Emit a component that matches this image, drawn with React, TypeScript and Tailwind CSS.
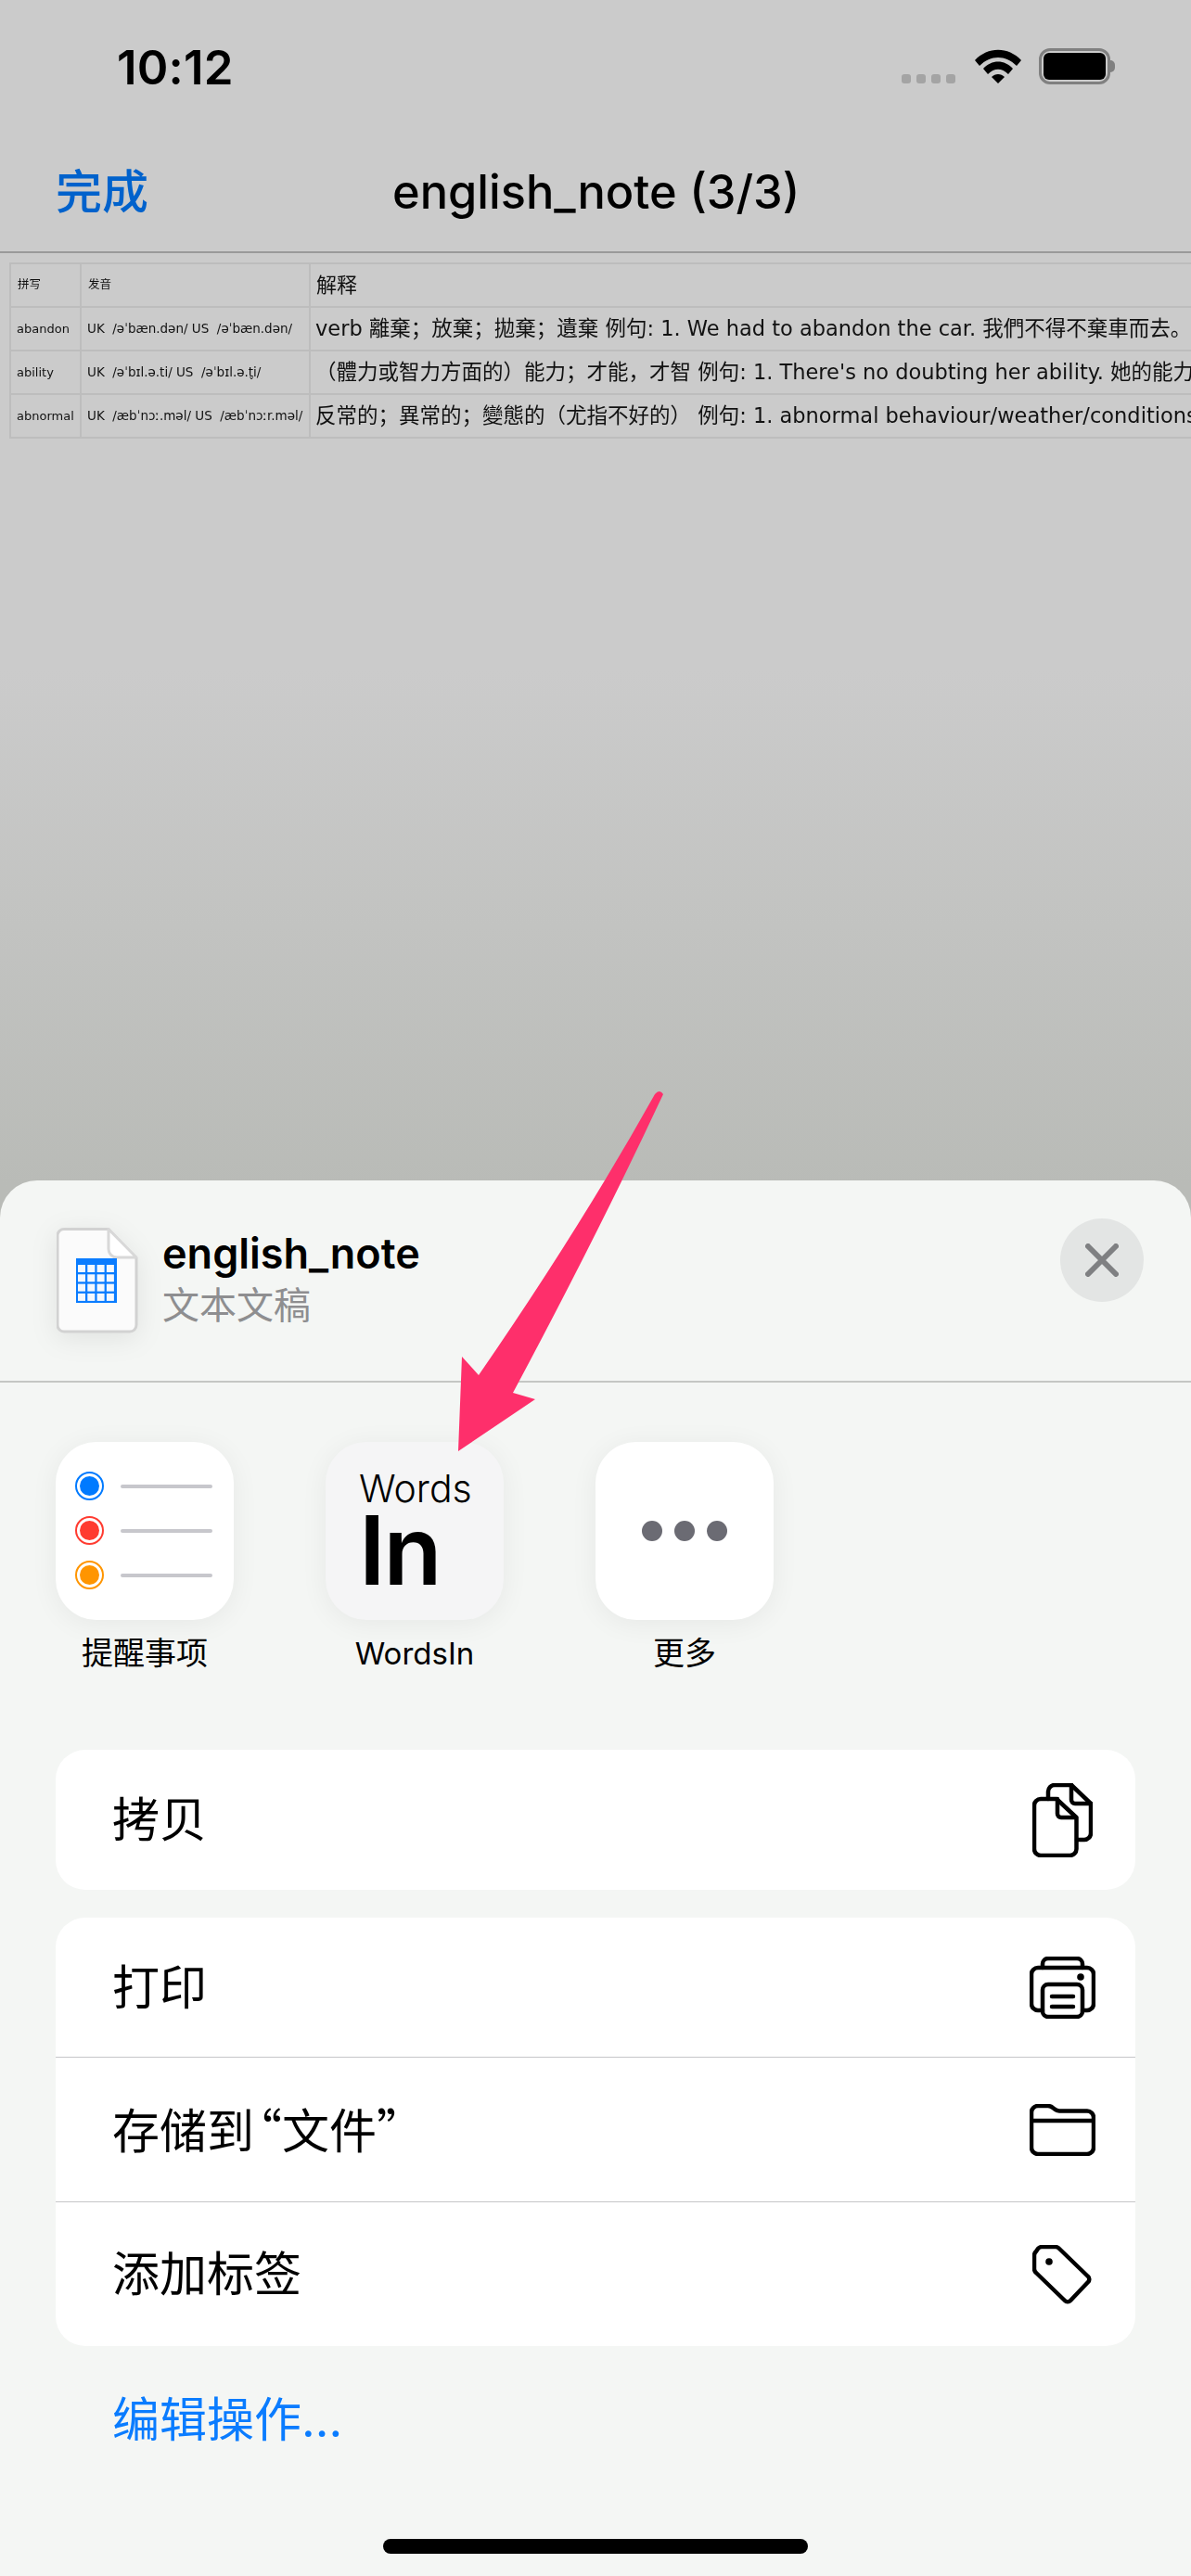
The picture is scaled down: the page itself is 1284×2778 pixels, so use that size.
// App.tsx
import React from 'react';

const tableRows = [
  {
    word: 'abandon',
    ipa: 'UK  /əˈbæn.dən/ US  /əˈbæn.dən/',
    meaning: 'verb 離棄；放棄；拋棄；遺棄 例句: 1. We had to abandon the car. 我們不得不棄車而去。',
  },
  {
    word: 'ability',
    ipa: 'UK  /əˈbɪl.ə.ti/ US  /əˈbɪl.ə.t̬i/',
    meaning: '（體力或智力方面的）能力；才能，才智 例句: 1. There\'s no doubting her ability. 她的能力',
  },
  {
    word: 'abnormal',
    ipa: 'UK  /æbˈnɔː.məl/ US  /æbˈnɔːr.məl/',
    meaning: '反常的；異常的；變態的（尤指不好的） 例句: 1. abnormal behaviour/weather/conditions',
  },
];

const WifiIcon = () => (
  <svg width="50" height="37" viewBox="0 0 50 37">
    <path d="M0 12 C14 -3 36 -3 50 12 L45 18 C33 6 17 6 5 18 Z" fill="#000" />
    <path d="M9 21 C18 11 32 11 41 21 L36 27 C29 20 21 20 14 27 Z" fill="#000" />
    <path d="M18 30 C22 26 28 26 32 30 L25 37 Z" fill="#000" />
  </svg>
);

const DocIcon = () => (
  <svg width="88" height="114" viewBox="0 0 88 114">
    <path d="M8 1.5 H56 L86 33 V105 a7 7 0 0 1 -7 7 H8 a7 7 0 0 1 -7 -7 V8 a7 7 0 0 1 7 -6.5 Z" fill="#fbfbfb" stroke="#d2d2d2" strokeWidth="3" />
    <path d="M56 1.5 V23 a9 9 0 0 0 9 9 H86 Z" fill="#fff" stroke="#d8d8d8" strokeWidth="3" strokeLinejoin="round" />
    <rect x="21" y="33" width="44" height="48" fill="#0a7cff" />
    {[0, 1, 2, 3].map((r) =>
      [0, 1, 2, 3].map((c) => (
        <rect key={`${r}-${c}`} x={23 + c * 10.3} y={40 + r * 10.3} width="8" height="8" fill="#f4f8fd" />
      ))
    )}
  </svg>
);

const ReminderRow = ({ color }: { color: string }) => (
  <div className="flex items-center gap-[18px]">
    <div className={`w-[31px] h-[31px] rounded-full border-[2.5px] p-[3px] ${color}`}>
      <div className="w-full h-full rounded-full bg-current" />
    </div>
    <div className="w-[99px] h-[4px] rounded-full bg-[#c7c7cc]" />
  </div>
);

const CopyIcon = () => (
  <svg width="65" height="80" viewBox="0 0 65 80" fill="none" stroke="#000" strokeWidth="4.5" strokeLinejoin="round" strokeLinecap="round">
    <path d="M17 17 V9 a7 7 0 0 1 7 -7 H42 L63 22 V54 a7 7 0 0 1 -7 7 H48" />
    <path d="M42 2 V18 a4 4 0 0 0 4 4 H63" />
    <path d="M2 24 a7 7 0 0 1 7 -7 H26 L47.5 37 V71 a7 7 0 0 1 -7 7 H9 a7 7 0 0 1 -7 -7 Z" />
    <path d="M27 17 V33 a4 4 0 0 0 4 4 H47" />
  </svg>
);

const PrintIcon = () => (
  <svg width="71" height="67" viewBox="0 0 71 67" fill="none" stroke="#000" strokeWidth="4.5" strokeLinejoin="round" strokeLinecap="round">
    <path d="M14 12 V8 a6 6 0 0 1 6 -6 H51 a6 6 0 0 1 6 6 V12" />
    <path d="M14 58 H9 a7 7 0 0 1 -7 -7 V19 a7 7 0 0 1 7 -7 H62 a7 7 0 0 1 7 7 V51 a7 7 0 0 1 -7 7 H57" />
    <rect x="14" y="30" width="43" height="35" rx="6" />
    <path d="M24 43 H47 M24 54 H47" />
    <circle cx="55" cy="22" r="3.8" fill="#000" stroke="none" />
  </svg>
);

const FolderIcon = () => (
  <svg width="71" height="56" viewBox="0 0 71 56" fill="none" stroke="#000" strokeWidth="4.5" strokeLinejoin="round" strokeLinecap="round">
    <path d="M2 9 a7 7 0 0 1 7 -7 H20 a8 8 0 0 1 5 2 l2 1.5 a8 8 0 0 0 5 2 H62 a7 7 0 0 1 7 7 V47 a7 7 0 0 1 -7 7 H9 a7 7 0 0 1 -7 -7 Z" />
    <path d="M2 18 H69" />
  </svg>
);

const TagIcon = () => (
  <svg width="64" height="64" viewBox="0 0 64 64" fill="none" stroke="#000" strokeWidth="4.5" strokeLinejoin="round">
    <path d="M10 2 H25 a6 6 0 0 1 4 2 L60 34 a4 4 0 0 1 0 6 L41 60 a4 4 0 0 1 -6 0 L4 30 a6 6 0 0 1 -2 -4 V11 a6 6 0 0 1 2 -4 L6 4 a6 6 0 0 1 4 -2 Z" />
    <circle cx="18" cy="18" r="3.8" fill="#000" stroke="none" />
  </svg>
);

const ArrowOverlay = () => (
  <svg className="absolute left-0 top-0 pointer-events-none" width="1284" height="1600" viewBox="0 0 1284 1600">
    <path
      d="M706 1180 Q711 1174 715 1180 Q645 1330 553 1502 L577 1509 L494 1565 L498 1463 L516 1483 Q625 1325 706 1180 Z"
      fill="#fe2f6b"
    />
  </svg>
);

const ActionRow = ({ label, icon, rowClass }: { label: React.ReactNode; icon: React.ReactNode; rowClass: string }) => (
  <div className={`flex items-center justify-between pl-[61px] ${rowClass}`}>
    <span className="text-[51px] leading-none text-black">{label}</span>
    <div className="w-[158px] flex justify-center">{icon}</div>
  </div>
);

export default function App() {
  return (
    <div className="relative w-[1284px] h-[2778px] overflow-hidden flex flex-col bg-linear-to-b from-[#cbcbcb] from-[26%] to-[#b9bbb7] to-[46%] font-['Inter','Noto_Sans_CJK_SC',sans-serif] text-black">
      {/* Status bar */}
      <div className="h-[110px] flex justify-between items-start pt-[49px] pl-[126px] pr-[82px]">
        <span className="text-[51px] leading-[48px] font-semibold tracking-[0.2px]">10:12</span>
        <div className="flex items-start pt-[4px]">
          <div className="flex gap-[6px] mt-[27px] mr-[21px]">
            <div className="w-[10px] h-[10px] rounded-[3px] bg-[#a4a4a4]" />
            <div className="w-[10px] h-[10px] rounded-[3px] bg-[#a4a4a4]" />
            <div className="w-[10px] h-[10px] rounded-[3px] bg-[#a4a4a4]" />
            <div className="w-[10px] h-[10px] rounded-[3px] bg-[#a4a4a4]" />
          </div>
          <WifiIcon />
          <div className="flex items-center ml-[19px] -mt-[1px]">
            <div className="w-[77px] h-[39px] rounded-[12px] border-[3px] border-[#808080] p-[2px]">
              <div className="w-full h-full rounded-[6px] bg-black" />
            </div>
            <div className="w-[5px] h-[13px] rounded-r-full bg-[#808080]" />
          </div>
        </div>
      </div>

      {/* Nav bar */}
      <div className="h-[163px] flex items-start justify-between border-b-2 border-[#9a9a9a] pl-[60px] pt-[67px]">
        <span className="w-[363px] text-[50px] leading-[60px] text-[#0062cc] font-medium">完成</span>
        <span className="flex-1 text-[50.5px] leading-[60px] font-medium">english_note (3/3)</span>
      </div>

      {/* Table */}
      <div className="flex-1 pt-[10px] pl-[10px] overflow-hidden">
        <table className="table-fixed w-[1500px] border-collapse font-['DejaVu_Sans','Noto_Sans_CJK_SC',sans-serif] text-[#111] blur-[0.35px]">
          <colgroup>
            <col className="w-[76px]" />
            <col className="w-[247px]" />
            <col />
          </colgroup>
          <tbody>
            <tr className="h-[47px]">
              <td className="border-2 border-[#bdbdbd] pl-[7px] text-[12.5px] whitespace-nowrap">拼写</td>
              <td className="border-2 border-[#bdbdbd] pl-[7px] text-[12.5px] whitespace-nowrap">发音</td>
              <td className="border-2 border-[#bdbdbd] pl-[6px] text-[22px] whitespace-nowrap">解释</td>
            </tr>
            {tableRows.map((row) => (
              <tr key={row.word} className="h-[47px]">
                <td className="border-2 border-[#bdbdbd] pl-[6px] text-[13px] whitespace-nowrap overflow-hidden">{row.word}</td>
                <td className="border-2 border-[#bdbdbd] pl-[6px] text-[13.5px] whitespace-pre overflow-hidden">{row.ipa}</td>
                <td className="border-2 border-[#bdbdbd] pl-[5px] text-[22.5px] whitespace-nowrap overflow-hidden">{row.meaning}</td>
              </tr>
            ))}
          </tbody>
        </table>
      </div>

      {/* Share sheet */}
      <div className="h-[1505px] rounded-t-[40px] bg-[#f4f6f4] flex flex-col">
        <div className="h-[218px] flex justify-between border-b-2 border-[#c4c6c3] pl-[61px] pr-[51px]">
          <div className="flex items-start pt-[51px] gap-[26px]">
            <div className="drop-shadow-[0_6px_14px_rgba(0,0,0,0.08)]">
              <DocIcon />
            </div>
            <div className="flex flex-col mt-[2px]">
              <span className="text-[45px] leading-[52px] font-semibold">english_note</span>
              <span className="text-[40px] leading-[52px] text-[#8e8e90] mt-[4px]">文本文稿</span>
            </div>
          </div>
          <div className="mt-[41px] w-[90px] h-[90px] rounded-full bg-[#e3e5e4] flex items-center justify-center">
            <svg width="36" height="36" viewBox="0 0 36 36" fill="none" stroke="#7f8082" strokeWidth="6" strokeLinecap="round">
              <path d="M3 3 L33 33 M33 3 L3 33" />
            </svg>
          </div>
        </div>

        {/* App icons */}
        <div className="flex gap-[99px] pl-[60px] pt-[64px]">
          <div className="w-[192px] flex flex-col items-center">
            <div className="w-[192px] h-[192px] rounded-[44px] bg-white shadow-[0_4px_30px_rgba(0,0,0,0.06)] flex flex-col gap-[17px] pl-[21px] pt-[32px]">
              <ReminderRow color="text-[#007aff] border-[#007aff]" />
              <ReminderRow color="text-[#ff3b30] border-[#ff3b30]" />
              <ReminderRow color="text-[#ff9500] border-[#ff9500]" />
            </div>
            <span className="text-[34px] leading-[40px] mt-[16px] whitespace-nowrap">提醒事项</span>
          </div>
          <div className="w-[192px] flex flex-col items-center">
            <div className="w-[192px] h-[192px] rounded-[44px] bg-[#f5f5f6] shadow-[0_4px_30px_rgba(0,0,0,0.06)] flex flex-col pl-[36px] pt-[28px]">
              <span className="text-[41px] leading-[44px] font-light">Words</span>
              <span className="text-[103px] leading-[90px] font-semibold tracking-[-2px]">In</span>
            </div>
            <span className="text-[33px] leading-[40px] mt-[16px] whitespace-nowrap">WordsIn</span>
          </div>
          <div className="w-[192px] flex flex-col items-center">
            <div className="w-[192px] h-[192px] rounded-[44px] bg-white shadow-[0_4px_30px_rgba(0,0,0,0.06)] flex items-center justify-center gap-[13px]">
              <div className="w-[22px] h-[22px] rounded-full bg-[#6b6b73]" />
              <div className="w-[22px] h-[22px] rounded-full bg-[#6b6b73]" />
              <div className="w-[22px] h-[22px] rounded-full bg-[#6b6b73]" />
            </div>
            <span className="text-[34px] leading-[40px] mt-[16px] whitespace-nowrap">更多</span>
          </div>
        </div>

        {/* Actions */}
        <div className="mx-[60px] mt-[84px] h-[151px] rounded-[32px] bg-white flex">
          <ActionRow label="拷贝" icon={<CopyIcon />} rowClass="flex-1" />
        </div>
        <div className="mx-[60px] mt-[30px] h-[462px] rounded-[32px] bg-white flex flex-col">
          <ActionRow label="打印" icon={<PrintIcon />} rowClass="h-[151px] border-b border-[#c6c6c8]" />
          <ActionRow
            label={
              <>
                存储到<span className="font-['Noto_Sans_CJK_SC'] -ml-[21px]">“</span>文件<span className="font-['Noto_Sans_CJK_SC']">”</span>
              </>
            }
            icon={<FolderIcon />}
            rowClass="flex-1 border-b border-[#c6c6c8]"
          />
          <ActionRow label="添加标签" icon={<TagIcon />} rowClass="flex-1" />
        </div>
        <span className="ml-[121px] mt-[49px] text-[51px] leading-[62px] text-[#0a7cff]">编辑操作...</span>
        <div className="mt-auto mb-[24px] mx-auto w-[458px] h-[16px] rounded-full bg-black" />
      </div>

      <ArrowOverlay />
    </div>
  );
}
